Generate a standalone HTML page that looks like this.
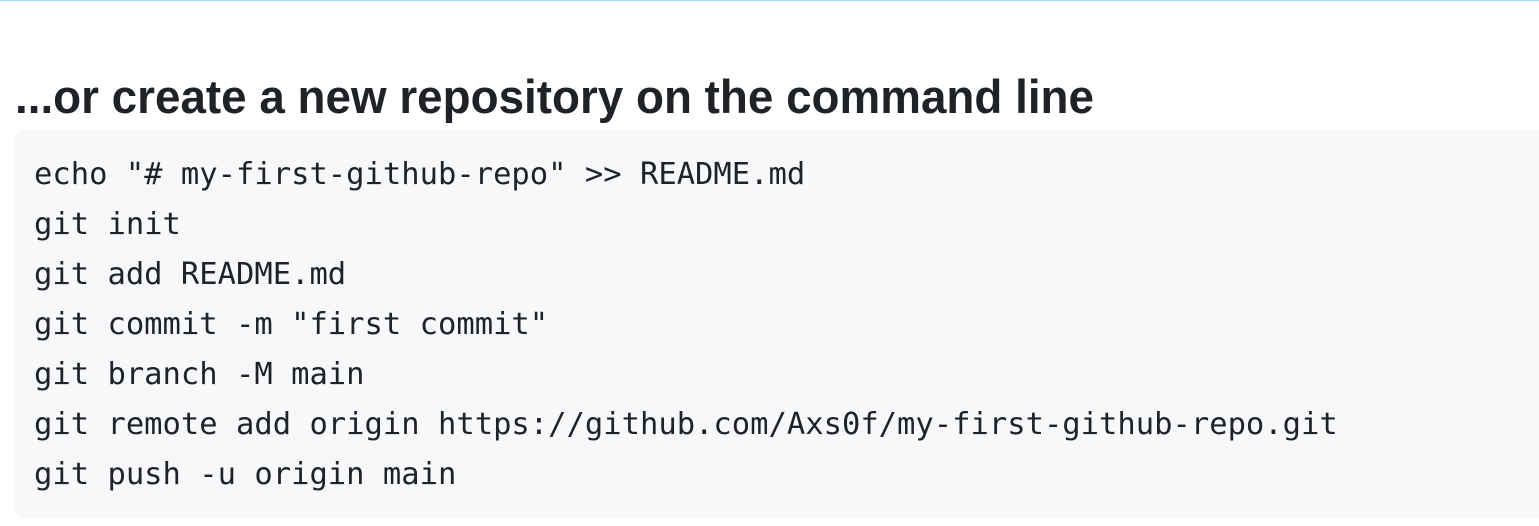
<!DOCTYPE html>
<html><head><style>
html,body{margin:0;padding:0;background:#fff;width:1539px;height:526px;overflow:hidden}
.top{position:absolute;left:0;top:0;width:1539px;height:1px;background:#a8d8fa}
svg{position:absolute;left:0;top:0}
.code{position:absolute;left:14px;top:130px;width:1560px;height:388px;background:#f6f8fa;border-radius:12px}
pre{position:absolute;left:34px;top:150px;margin:0;font-family:"DejaVu Sans Mono","Liberation Mono",monospace;font-size:30.5px;line-height:50px;color:#1f2328}
</style></head><body>
<div class="top"></div>
<svg width="1539" height="130"><text x="15" y="113" textLength="1079" lengthAdjust="spacingAndGlyphs" font-family="Liberation Sans, sans-serif" font-weight="bold" font-size="47" fill="#1f2328">...or create a new repository on the command line</text></svg>
<div class="code"></div>
<pre>echo "# my-first-github-repo" &gt;&gt; README.md
git init
git add README.md
git commit -m "first commit"
git branch -M main
git remote add origin https://github.com/Axs0f/my-first-github-repo.git
git push -u origin main</pre>
</body></html>
